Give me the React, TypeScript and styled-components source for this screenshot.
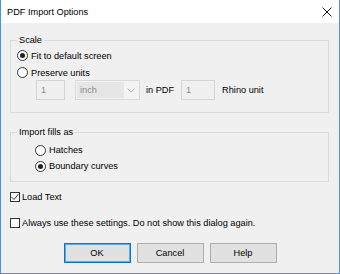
import React from "react";
import styled, { createGlobalStyle } from "styled-components";

const Global = createGlobalStyle`
  html, body { margin: 0; padding: 0; background: #ffffff; }
  body { font-family: "Liberation Sans", Arial, sans-serif; font-size: 9.2px; color: #000; }
  * { box-sizing: border-box; }
`;

const Window = styled.div`
  width: 340px;
  height: 274px;
  border: 1px solid #4a95e0;
  border-top: none;
  background: #f0f0f0;
  display: flex;
  flex-direction: column;
`;

const TitleBar = styled.div`
  height: 23px;
  background: #ffffff;
  display: flex;
  align-items: center;
  justify-content: space-between;
  padding: 1px 7px 0 6px;
  font-size: 9.2px;
`;

const Content = styled.div`
  padding: 0 10px 0 9px;
  display: flex;
  flex-direction: column;
`;

const Group = styled.fieldset<{ $mt: number; $pl: number; $pt: number; $pb: number }>`
  margin: ${(p) => p.$mt}px 0 0 0;
  padding: ${(p) => p.$pt}px 6px ${(p) => p.$pb}px ${(p) => p.$pl}px;
  border: 1px solid #dadada;
  min-inline-size: 0;
  display: flex;
  flex-direction: column;
`;

const Legend = styled.legend`
  padding: 0 2px;
  line-height: 12px;
  height: 12px;
  margin-left: ${(p: { $ml?: number }) => p.$ml ?? 0}px;
`;

const OptionRow = styled.label<{ $h?: number }>`
  display: flex;
  align-items: center;
  height: ${(p) => p.$h ?? 16}px;
  gap: 3px;
`;

const Radio = styled.span<{ $on?: boolean }>`
  width: 11px;
  height: 11px;
  border: 1px solid #333;
  border-radius: 50%;
  background: #fff;
  display: flex;
  align-items: center;
  justify-content: center;
  &::after {
    content: "";
    width: 5px;
    height: 5px;
    border-radius: 50%;
    background: ${(p) => (p.$on ? "#222" : "transparent")};
  }
`;

const Check = styled.span`
  width: 10px;
  height: 10px;
  border: 1px solid #333;
  background: #fff;
  display: flex;
  align-items: center;
  justify-content: center;
`;

const InputRow = styled.div`
  display: flex;
  align-items: center;
  height: 20px;
  margin-top: -1px;
  padding-left: 19px;
  color: #000;
`;

const TextBox = styled.div<{ $w: number; $ml?: number }>`
  width: ${(p) => p.$w}px;
  height: 20px;
  margin-left: ${(p) => p.$ml ?? 0}px;
  border: 1px solid #d4d4d4;
  background: #f0f0f0;
  color: #8a8a8a;
  padding-left: 4px;
  display: flex;
  align-items: center;
`;

const Combo = styled.div`
  width: 65px;
  height: 20px;
  margin-left: 10px;
  border: 1px solid #d9d9d9;
  background: #f3f3f3;
  display: flex;
  align-items: center;
  padding: 1px;
`;

const ComboValue = styled.span`
  flex: 1;
  height: 100%;
  background: #e6e6e6;
  color: #8a8a8a;
  padding-left: 3px;
  display: flex;
  align-items: center;
`;

const ComboArrow = styled.span`
  width: 14px;
  display: flex;
  align-items: center;
  justify-content: center;
`;

const InlineText = styled.span<{ $ml: number }>`
  margin-left: ${(p) => p.$ml}px;
`;

const CheckRow = styled.label<{ $mt: number }>`
  display: flex;
  align-items: center;
  height: 17px;
  gap: 2px;
  margin-top: ${(p) => p.$mt}px;
`;

const Buttons = styled.div`
  display: flex;
  justify-content: center;
  gap: 6px;
  margin-top: 12px;
  padding-left: 1px;
`;

const Button = styled.button<{ $primary?: boolean }>`
  width: 67px;
  height: 20px;
  font: inherit;
  color: #000;
  background: #e1e1e1;
  border: 1px solid ${(p) => (p.$primary ? "#0078d7" : "#adadad")};
  box-shadow: ${(p) => (p.$primary ? "inset 0 0 0 1px #63a9e8" : "none")};
  padding: 0;
`;

export default function App() {
  return (
    <>
      <Global />
      <Window>
        <TitleBar>
          <span>PDF Import Options</span>
          <svg width="10" height="10" viewBox="0 0 10 10">
            <path d="M0.5 0.5 L9.5 9.5 M9.5 0.5 L0.5 9.5" stroke="#111" strokeWidth="1" />
          </svg>
        </TitleBar>
        <Content>
          <Group $mt={11} $pl={6} $pt={1} $pb={12}>
            <Legend>Scale</Legend>
            <OptionRow $h={17}>
              <Radio $on />
              <span>Fit to default screen</span>
            </OptionRow>
            <OptionRow $h={17}>
              <Radio />
              <span>Preserve units</span>
            </OptionRow>
            <InputRow>
              <TextBox $w={29}>1</TextBox>
              <Combo>
                <ComboValue>inch</ComboValue>
                <ComboArrow>
                  <svg width="8" height="5" viewBox="0 0 8 5">
                    <path d="M0.5 0.5 L4 4 L7.5 0.5" stroke="#b5b5b5" fill="none" strokeWidth="1" />
                  </svg>
                </ComboArrow>
              </Combo>
              <InlineText $ml={6}>in PDF</InlineText>
              <TextBox $w={34} $ml={7}>1</TextBox>
              <InlineText $ml={7}>Rhino unit</InlineText>
            </InputRow>
          </Group>
          <Group $mt={13} $pl={24} $pt={4} $pb={7}>
            <Legend $ml={-18}>Import fills as</Legend>
            <OptionRow>
              <Radio />
              <span>Hatches</span>
            </OptionRow>
            <OptionRow>
              <Radio $on />
              <span>Boundary curves</span>
            </OptionRow>
          </Group>
          <CheckRow $mt={6}>
            <Check>
              <svg width="8" height="8" viewBox="0 0 8 8">
                <path d="M0.5 4 L3 6.5 L7.5 1" stroke="#333" fill="none" strokeWidth="1" />
              </svg>
            </Check>
            <span>Load Text</span>
          </CheckRow>
          <CheckRow $mt={9}>
            <Check />
            <span>Always use these settings. Do not show this dialog again.</span>
          </CheckRow>
          <Buttons>
            <Button $primary>OK</Button>
            <Button>Cancel</Button>
            <Button>Help</Button>
          </Buttons>
        </Content>
      </Window>
    </>
  );
}
